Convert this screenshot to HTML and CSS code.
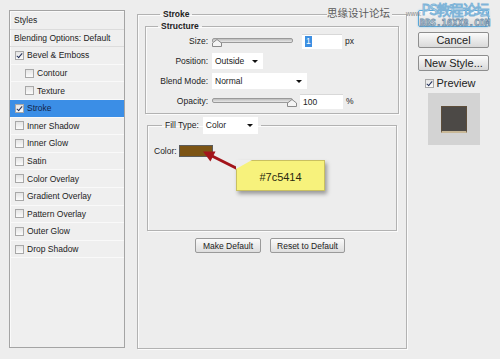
FILE: index.html
```html
<!DOCTYPE html>
<html lang="en">

<head>
    <meta charset="UTF-8">
    <title>Layer Style</title>
    <link rel="stylesheet" href="styles.css">
</head>

<body>
    <div class="dialog">
        <!-- styles list -->
        <div class="styles-list">
            <div class="row head">Styles</div>
            <div class="row head">Blending Options: Default</div>
            <div class="row"><span class="check on"></span>Bevel &amp; Emboss</div>
            <div class="row sub"><span class="check"></span>Contour</div>
            <div class="row sub"><span class="check"></span>Texture</div>
            <div class="row selected"><span class="check on"></span>Stroke</div>
            <div class="row"><span class="check"></span>Inner Shadow</div>
            <div class="row"><span class="check"></span>Inner Glow</div>
            <div class="row"><span class="check"></span>Satin</div>
            <div class="row"><span class="check"></span>Color Overlay</div>
            <div class="row"><span class="check"></span>Gradient Overlay</div>
            <div class="row"><span class="check"></span>Pattern Overlay</div>
            <div class="row"><span class="check"></span>Outer Glow</div>
            <div class="row"><span class="check"></span>Drop Shadow</div>
        </div>

        <!-- stroke options -->
        <fieldset class="group stroke">
            <legend>Stroke</legend>
            <fieldset class="group structure">
                <legend>Structure</legend>
                <div class="field">
                    <label>Size:</label>
                    <div class="slider">
                        <span class="track"></span>
                        <svg class="thumb left" width="10" height="8" viewBox="0 0 10 8"><path d="M0.5 7.5 L0.5 4 L5 0.5 L9.5 4 L9.5 7.5 Z" fill="#f4f4f4" stroke="#8a8a8a"/></svg>
                    </div>
                    <div class="input small"><span class="sel">1</span></div>
                    <span class="unit">px</span>
                </div>
                <div class="field">
                    <label>Position:</label>
                    <div class="select pos">Outside<span class="caret"></span></div>
                </div>
                <div class="field">
                    <label>Blend Mode:</label>
                    <div class="select mode">Normal<span class="caret"></span></div>
                </div>
                <div class="field">
                    <label>Opacity:</label>
                    <div class="slider">
                        <span class="track"></span>
                        <svg class="thumb right" width="10" height="8" viewBox="0 0 10 8"><path d="M0.5 7.5 L0.5 4 L5 0.5 L9.5 4 L9.5 7.5 Z" fill="#f4f4f4" stroke="#8a8a8a"/></svg>
                    </div>
                    <div class="input opac">100</div>
                    <span class="unit">%</span>
                </div>
            </fieldset>

            <fieldset class="group fill">
                <legend>Fill Type: <span class="select type">Color<span class="caret"></span></span></legend>
                <div class="color-row">
                    <span>Color:</span>
                    <span class="swatch"></span>
                </div>
                <svg class="arrow" width="120" height="60" viewBox="0 0 120 60">
                    <line x1="92" y1="36" x2="63" y2="21.5" stroke="#a3141a" stroke-width="3"/>
                    <path d="M55 17.5 L67.5 17.6 L62.4 27.6 Z" fill="#a3141a"/>
                </svg>
                <div class="note">#7c5414</div>
            </fieldset>

            <div class="actions">
                <button class="btn">Make Default</button>
                <button class="btn">Reset to Default</button>
            </div>
        </fieldset>

        <!-- buttons -->
        <div class="side">
            <button class="side-btn ok"></button>
            <button class="side-btn">Cancel</button>
            <button class="side-btn">New Style...</button>
            <div class="preview-check"><span class="check on"></span>Preview</div>
            <div class="preview">
                <span class="preview-swatch"></span>
            </div>
        </div>
    </div>

    <div class="watermark">
        <span class="site">思缘设计论坛</span>
        <span class="url">www.</span>
    </div>
    <div class="stamp">
        <span class="big">PS教程论坛</span>
        <span class="small">BBS.16XX8.COM</span>
    </div>
</body>

</html>
```

FILE: styles.css
```css
/* Layer style dialog */
body {
    margin: 0;
    padding: 0;
    width: 500px;
    height: 359px;
    overflow: hidden;
    background-color: #ededed;
    font-family: "Liberation Sans", Arial, sans-serif;
    font-size: 8.5px;
    color: #222;
    position: relative;
}

.dialog {
    display: flex;
    align-items: flex-start;
}

/* left list */
.styles-list {
    margin: 10px 0 0 9px;
    width: 114px;
    height: 335px;
    padding-top: 1px;
    border: 1px solid #a4a4a4;
    background-color: #efefef;
    box-shadow: inset 1px 1px 0 #fafafa;
}

.row {
    height: 17.6px;
    box-sizing: border-box;
    display: flex;
    align-items: center;
    padding-left: 5px;
    border-bottom: 1px solid #f9f9f9;
    white-space: nowrap;
}

.row.head {
    padding-left: 4px;
    border-bottom: 1px solid #dcdcdc;
}

.row.sub {
    padding-left: 15px;
}

.row.selected {
    background-color: #3b8ee6;
    color: #14254a;
}

.check {
    display: inline-block;
    width: 7px;
    height: 7px;
    border: 1px solid #a8a8a8;
    background: linear-gradient(#e4e4e4, #fbfbfb);
    margin-right: 3px;
    position: relative;
    flex-shrink: 0;
}

.check.on::after {
    content: "";
    position: absolute;
    left: 2px;
    top: 0px;
    width: 2px;
    height: 5px;
    border: solid #22305a;
    border-width: 0 1.5px 1.5px 0;
    transform: rotate(40deg);
}

/* group boxes */
.group {
    margin: 0;
    padding: 0;
    border: 1px solid #b2b2b2;
    box-shadow: inset 1px 1px 0 #fbfbfb, 1px 1px 0 #fbfbfb;
    min-width: 0;
}

.group legend {
    font-weight: bold;
    line-height: 12px;
    padding: 0 3px;
}

.stroke {
    margin: 8px 0 0 12px;
    width: 270px;
    height: 341px;
    box-sizing: border-box;
    padding: 0 7px 0 7px;
}

.stroke > legend {
    margin-left: 15px;
}

.structure {
    margin-top: 0;
    padding: 1px 0 4px 0;
}

.structure > legend {
    margin-left: 12px;
}

.field {
    display: flex;
    align-items: center;
    height: 16px;
    margin-bottom: 4px;
}

.field:last-child {
    margin-bottom: 0;
}

.field label {
    width: 62px;
    text-align: right;
    margin-right: 4px;
    flex-shrink: 0;
}

.slider {
    width: 81px;
    height: 10px;
    position: relative;
}

.track {
    position: absolute;
    left: 0;
    right: 0;
    top: 2px;
    height: 3px;
    border: 1px solid #9a9a9a;
    border-radius: 2px;
    background: linear-gradient(#bdbdbd, #e8e8e8);
}

.thumb {
    position: absolute;
    top: 3px;
}

.thumb.left {
    left: 0;
}

.thumb.right {
    right: -4px;
}

.input {
    height: 15px;
    background-color: #fff;
    border-top: 1px solid #d8d8d8;
    box-sizing: border-box;
    padding-left: 3px;
    display: flex;
    align-items: center;
}

.input.small {
    width: 40px;
    margin-left: 9px;
}

.input.opac {
    width: 43px;
    margin-left: 7px;
}

.sel {
    background-color: #3d8fe2;
    color: #fff;
    padding: 0 1px;
    line-height: 11px;
}

.unit {
    margin-left: 3px;
}

.select {
    height: 16px;
    background-color: #fff;
    display: flex;
    align-items: center;
    padding-left: 3px;
    box-sizing: border-box;
    position: relative;
}

.select.pos {
    width: 51px;
}

.select.mode {
    width: 95px;
}

.caret {
    position: absolute;
    right: 5px;
    top: 7px;
    border-left: 3px solid transparent;
    border-right: 3px solid transparent;
    border-top: 3px solid #111;
}

/* fill */
.fill {
    margin: 3px 2px 0 2px;
    height: 114px;
    box-sizing: border-box;
    position: relative;
    padding: 11px 0 0 6px;
}

.fill > legend {
    font-weight: normal;
    margin-left: 8px;
    display: flex;
    align-items: center;
    line-height: 17px;
}

.select.type {
    display: inline-flex;
    width: 55px;
    margin-left: 4px;
    height: 17px;
}

.color-row {
    display: flex;
    align-items: center;
}

.swatch {
    width: 34px;
    height: 12px;
    background-color: #7c5414;
    border: 1px solid #5c5c5c;
    box-sizing: border-box;
    margin-left: 2px;
}

.arrow {
    position: absolute;
    left: 0;
    top: 0;
}

.note {
    position: absolute;
    left: 88px;
    top: 26px;
    width: 89px;
    height: 31px;
    box-sizing: border-box;
    background-color: #f7f27c;
    border: 1px solid #c9c060;
    box-shadow: 2px 3px 4px rgba(0, 0, 0, 0.35);
    display: flex;
    align-items: center;
    justify-content: center;
    font-size: 11px;
    color: #2a2a10;
    padding-top: 2px;
}

.note::before {
    content: "";
    position: absolute;
    left: -1px;
    top: -1px;
    border-top: 9px solid #ededed;
    border-right: 16px solid transparent;
}

.actions {
    display: flex;
    justify-content: center;
    gap: 9px;
    margin-top: 7px;
    padding-right: 4px;
}

.btn {
    height: 15px;
    padding: 0;
    white-space: nowrap;
    font-family: "Liberation Sans", Arial, sans-serif;
    font-size: 8.5px;
    color: #222;
    border: 1px solid #9a9a9a;
    border-radius: 2px;
    background: linear-gradient(#fafafa, #dedede);
    line-height: 12px;
}

.btn:first-child {
    width: 66px;
}

.btn:last-child {
    width: 75px;
}

/* right side */
.side {
    margin: 10px 0 0 11px;
    width: 71px;
    display: flex;
    flex-direction: column;
    align-items: center;
}

.side-btn {
    width: 71px;
    height: 16px;
    margin-bottom: 7px;
    font-family: "Liberation Sans", Arial, sans-serif;
    font-size: 11px;
    color: #222;
    border: 1px solid #8e8e8e;
    border-radius: 2px;
    background: linear-gradient(#fbfbfb, #d9d9d9);
    line-height: 13px;
    padding: 0;
}

.side-btn.ok {
    height: 17px;
    margin-bottom: 5px;
    border-color: #58a6d8;
    box-shadow: 0 0 2px #8cc8ec;
}

.preview-check {
    display: flex;
    align-items: center;
    font-size: 11px;
    margin-top: -1px;
    padding-right: 6px;
}

.preview-check .check {
    margin-right: 2px;
}

.preview {
    margin-top: 4px;
    width: 52px;
    height: 52px;
    background-color: #d3d3d3;
    display: flex;
    align-items: center;
    justify-content: center;
}

.preview-swatch {
    width: 26px;
    height: 27px;
    box-sizing: border-box;
    background-color: #4c4946;
    border: 1px solid #5e4e3a;
    border-bottom: 2px solid #c8b898;
}

/* watermark over the top */
.watermark {
    position: absolute;
    left: 327px;
    top: 6px;
    display: flex;
    align-items: center;
}

.watermark .site {
    font-family: "Noto Sans CJK SC", sans-serif;
    font-size: 10.5px;
    line-height: 14px;
    color: #5a5a5a;
    background-color: #ededed;
    padding-right: 2px;
}

.watermark .url {
    font-size: 6.5px;
    color: #888;
    margin-left: 14px;
}

.stamp {
    position: absolute;
    left: 418px;
    top: 1px;
    width: 74px;
    display: flex;
    flex-direction: column;
    align-items: center;
}

.stamp .big {
    font-family: "Noto Sans CJK SC", sans-serif;
    font-size: 14px;
    line-height: 17px;
    color: #fff;
    -webkit-text-stroke: 1px #7fb4d8;
    letter-spacing: -1px;
}

.stamp .small {
    font-family: "DejaVu Sans Mono", monospace;
    font-size: 9px;
    line-height: 9px;
    margin-top: 1px;
    color: #fff;
    -webkit-text-stroke: 0.8px #6f8ea8;
    font-weight: bold;
}
```
